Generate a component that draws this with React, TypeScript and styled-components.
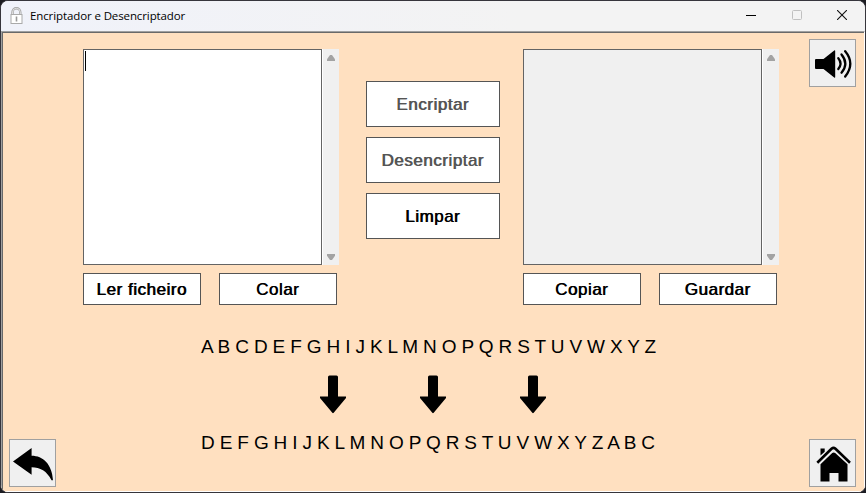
import React from "react";
import styled, { createGlobalStyle } from "styled-components";

const GlobalStyle = createGlobalStyle`
  * { box-sizing: border-box; }
  html, body { margin: 0; height: 100%; overflow: hidden; background: #1c1c22; }
  button { padding: 0; margin: 0; }
`;

const Window = styled.div`
  width: 866px;
  height: 493px;
  display: flex;
  flex-direction: column;
  border: 1px solid #36353c;
  border-radius: 8px;
  background: #f2f2f5;
  overflow: hidden;
`;

const TitleBar = styled.header`
  flex: 0 0 30px;
  display: flex;
  align-items: center;
  background: linear-gradient(90deg, #f0f2fa, #f3f3f3 60%);
  padding-left: 8px;
`;

const Title = styled.h1`
  flex: 1;
  margin: 0 0 0 6px;
  font: 400 11.5px/16px "Open Sans", "Noto Sans", sans-serif;
  letter-spacing: -0.11px;
  color: #000;
  white-space: nowrap;
`;

const WindowControls = styled.div`
  display: flex;
  width: 137px;
  height: 30px;
  padding-bottom: 2px;
`;

const Control = styled.button`
  flex: 1;
  display: grid;
  place-items: center;
  border: 0;
  background: none;
`;

const Client = styled.main`
  flex: 1;
  display: grid;
  grid-template-columns: 74px 1fr 55px;
  border-top: 1px solid #a0a0a0;
  border-left: 1px solid #a0a0a0;
  border-right: 1px solid #fff;
  border-bottom: 1px solid #fff;
  box-shadow: inset 1px 1px 0 #696969;
  background: #ffe0c0;
`;

const SideColumn = styled.aside<{ $justify: string }>`
  display: flex;
  flex-direction: column;
  justify-content: ${(p) => p.$justify};
  padding: 7px 0 4px;
`;

const LeftColumn = styled(SideColumn)`
  padding-left: 7px;
`;

const IconButton = styled.button`
  width: 47px;
  height: 48px;
  border: 1px solid #a0a0a0;
  background: #f0f0f0;
  display: grid;
  place-items: center;
  svg { display: block; }
`;

const Center = styled.section`
  display: flex;
  flex-direction: column;
  padding: 17px 0 0 7px;
`;

const Workspace = styled.div`
  display: grid;
  grid-template-columns: 256px 134px 256px;
  column-gap: 27px;
  & > :last-child { margin-left: -4px; margin-right: 4px; }
`;

const Panel = styled.div`
  display: flex;
  flex-direction: column;
  gap: 8px;
  width: 256px;
`;

const Editor = styled.div`
  display: flex;
  height: 216px;
`;

const TextArea = styled.div<{ $disabled?: boolean }>`
  width: 239px;
  border: 1px solid #646464;
  background: ${(p) => (p.$disabled ? "#f0f0f0" : "#fff")};
  padding: 1px;
`;

const Caret = styled.span`
  display: block;
  width: 1px;
  height: 20px;
  background: #000;
`;

const ScrollBar = styled.div`
  width: 17px;
  border-left: 1px solid #fff;
  background: #f0f0f0;
  display: flex;
  flex-direction: column;
  justify-content: space-between;
  align-items: center;
  padding: 6px 0 5px;
  svg { display: block; }
`;

const Actions = styled.div`
  display: flex;
  gap: 18px;
`;

const MainActions = styled.div`
  display: flex;
  flex-direction: column;
  gap: 10px;
  padding-top: 32px;
`;

const TextButton = styled.button<{ $height: number; $muted?: boolean }>`
  width: 100%;
  height: ${(p) => p.$height}px;
  flex: 0 1 ${(p) => (p.$height < 40 ? "118px" : "46px")};
  padding: 2px 1px 0 0;
  border: 1px solid #555;
  background: #fff;
  color: ${(p) => (p.$muted ? "#555" : "#000")};
  font: 400 17px/20px "Liberation Sans", Arial, sans-serif;
  letter-spacing: 0.52px;
  text-shadow: 0.7px 0 0 currentColor;
  white-space: nowrap;
`;

const Cipher = styled.div`
  width: 460px;
  margin: 30px 0 0 118px;
  display: flex;
  flex-direction: column;
`;

const Alphabet = styled.p`
  margin: 0;
  font: 400 19px/24px "Liberation Sans", Arial, sans-serif;
  letter-spacing: -0.16px;
  color: #000;
  white-space: nowrap;
`;

const Arrows = styled.div`
  display: flex;
  gap: 74px;
  margin: 16px 0 17px 119px;
  svg { display: block; }
`;

const LockIcon = () => (
  <svg width="15" height="18" viewBox="0 0 15 18" fill="none">
    <path d="M3.5 8V5.2a3.7 3.7 0 0 1 7.8 0V8" stroke="#a3a3a3" strokeWidth="2.4" />
    <path d="M3.5 8V5.2a3.7 3.7 0 0 1 7.8 0V8" stroke="#f1f1f1" strokeWidth=".8" />
    <rect x="2" y="7.5" width="11" height="9" fill="#fff" stroke="#aaa" />
    <path d="M7.5 9.5v5" stroke="#999" strokeWidth="1.6" />
  </svg>
);

const SpeakerIcon = () => (
  <svg width="45" height="46" viewBox="0 0 45 46">
    <path d="M5 20q0-1 1-1h7.500L24.2 10.500q1-.7 1 .5v26q0 1.200-1 .5L13.500 29H6q-1 0-1-1z" />
    <g fill="none" stroke="#000" strokeWidth="2.300" strokeLinecap="round">
      <path d="M28.300 18.200q4.400 5.300 0 10.800" />
      <path d="M31.500 14.500q7.600 9.200 0 18.200" />
      <path d="M35.200 11.200q10.200 12.300 0 25.300" />
    </g>
  </svg>
);

const BackIcon = () => (
  <svg width="45" height="46" viewBox="0 0 45 46">
    <path d="M3 21.500 21.600 8v7.700C33 15.700 42 24 43 40.300h-1.500C37 31 30 27.200 21.600 27.200v7.600z" />
  </svg>
);

const HomeIcon = () => (
  <svg width="45" height="46" viewBox="0 0 45 46">
    <path d="M10.500 8.500h4.200v3.300l-4.200 3.600z" />
    <path d="M7.300 22.800 21.500 8.800Q23.500 7 25.500 8.800L40 22.800" fill="none" stroke="#000" strokeWidth="2.600" />
    <path d="M10.500 24.300 22.200 13q1.500-1.200 3 0l12.300 11.300V41.500H28.500V33h-9v8.500h-9z" />
  </svg>
);

const DownArrow = () => (
  <svg width="26" height="39" viewBox="0 0 26 39">
    <path d="M8 2q0-1.500 1.500-1.500h7Q18 .5 18 2v19.500h8v1.400L13.700 37.800q-.7.700-1.400 0L0 22.900v-1.400h8z" />
  </svg>
);

const ScrollArrow = ({ down = false }: { down?: boolean }) => (
  <svg width="8" height="6" viewBox="0 0 8 6">
    <path
      d={down ? "M0 0h8v1.800L5 6H3L0 1.800z" : "M3 0h2l3 4.200V6H0V4.200z"}
      fill="#a3a3a3"
    />
  </svg>
);

function TextPanel({ actions, disabled }: { actions: string[]; disabled?: boolean }) {
  return (
    <Panel>
      <Editor>
        <TextArea $disabled={disabled}>{!disabled && <Caret />}</TextArea>
        <ScrollBar>
          <ScrollArrow />
          <ScrollArrow down />
        </ScrollBar>
      </Editor>
      <Actions>
        {actions.map((label) => (
          <TextButton key={label} $height={32}>{label}</TextButton>
        ))}
      </Actions>
    </Panel>
  );
}

export default function App() {
  return (
    <>
      <GlobalStyle />
      <Window>
        <TitleBar>
          <LockIcon />
          <Title>Encriptador e Desencriptador</Title>
          <WindowControls>
            <Control aria-label="Minimizar">
              <svg width="10" height="10"><path d="M0 5.500h10" stroke="#000" /></svg>
            </Control>
            <Control aria-label="Maximizar" disabled>
              <svg width="10" height="10">
                <rect x=".5" y=".5" width="9" height="9" rx="1" fill="none" stroke="#c0c0c0" />
              </svg>
            </Control>
            <Control aria-label="Fechar">
              <svg width="10" height="10"><path d="m0 0 10 10M10 0 0 10" stroke="#111" strokeWidth="1.100" /></svg>
            </Control>
          </WindowControls>
        </TitleBar>
        <Client>
          <LeftColumn $justify="flex-end">
            <IconButton aria-label="Voltar"><BackIcon /></IconButton>
          </LeftColumn>
          <Center>
            <Workspace>
              <TextPanel actions={["Ler ficheiro", "Colar"]} />
              <MainActions>
                <TextButton $height={46} $muted>Encriptar</TextButton>
                <TextButton $height={46} $muted>Desencriptar</TextButton>
                <TextButton $height={46}>Limpar</TextButton>
              </MainActions>
              <TextPanel actions={["Copiar", "Guardar"]} disabled />
            </Workspace>
            <Cipher>
              <Alphabet>A B C D E F G H I J K L M N O P Q R S T U V W X Y Z</Alphabet>
              <Arrows>
                <DownArrow />
                <DownArrow />
                <DownArrow />
              </Arrows>
              <Alphabet>D E F G H I J K L M N O P Q R S T U V W X Y Z A B C</Alphabet>
            </Cipher>
          </Center>
          <SideColumn $justify="space-between">
            <IconButton aria-label="Som"><SpeakerIcon /></IconButton>
            <IconButton aria-label="Início"><HomeIcon /></IconButton>
          </SideColumn>
        </Client>
      </Window>
    </>
  );
}
